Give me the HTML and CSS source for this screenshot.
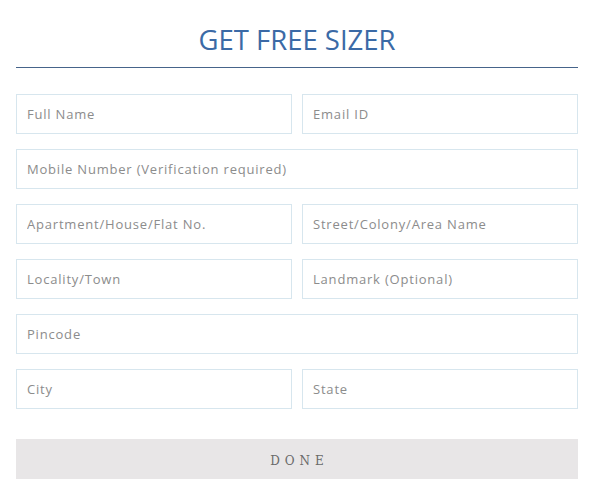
FILE: index.html
```html
<!DOCTYPE html>
<html>
<head>
<meta charset="utf-8">
<link rel="stylesheet" href="styles.css">
</head>
<body>
<div class="form-wrap">
  <h1 class="title">GET FREE SIZER</h1>
  <form class="form">
    <div class="row two">
      <input class="field" type="text" placeholder="Full Name">
      <input class="field" type="text" placeholder="Email ID">
    </div>
    <div class="row">
      <input class="field" type="text" placeholder="Mobile Number (Verification required)">
    </div>
    <div class="row two">
      <input class="field" type="text" placeholder="Apartment/House/Flat No.">
      <input class="field" type="text" placeholder="Street/Colony/Area Name">
    </div>
    <div class="row two">
      <input class="field" type="text" placeholder="Locality/Town">
      <input class="field" type="text" placeholder="Landmark (Optional)">
    </div>
    <div class="row">
      <input class="field" type="text" placeholder="Pincode">
    </div>
    <div class="row two">
      <input class="field" type="text" placeholder="City">
      <input class="field" type="text" placeholder="State">
    </div>
    <button class="done" type="button">DONE</button>
  </form>
</div>
</body>
</html>
```

FILE: styles.css
```css
html, body {
  margin: 0;
  padding: 0;
  background: #fff;
}
.form-wrap {
  padding: 0 12px 0 16px;
  font-family: "Open Sans", "Liberation Sans", sans-serif;
}
.title {
  margin: 0;
  padding-top: 25px;
  padding-bottom: 12px;
  text-align: center;
  font-weight: 400;
  font-size: 27.5px;
  line-height: 30px;
  color: #3b6aa6;
  border-bottom: 1px solid #46648a;
}
.form {
  display: flex;
  flex-direction: column;
  gap: 15px;
  padding-top: 26px;
}
.row {
  display: grid;
  grid-template-columns: 1fr;
  gap: 10px;
}
.row.two {
  grid-template-columns: 1fr 1fr;
}
.field {
  box-sizing: border-box;
  height: 40px;
  width: 100%;
  margin: 0;
  border: 1px solid #d7e6ee;
  border-radius: 0;
  padding: 0 10px;
  font-family: "Open Sans", "Liberation Sans", sans-serif;
  font-size: 13px;
  letter-spacing: 0.8px;
  color: #555;
  background: #fff;
  outline: none;
}
.field::placeholder {
  color: #8c8c8c;
}
.done {
  margin-top: 15px;
  height: 40px;
  border: 0;
  background: #e8e6e7;
  color: #6a6a6a;
  font-family: "DejaVu Serif", "Liberation Serif", serif;
  font-size: 12px;
  letter-spacing: 5px;
  padding: 4px 0 0 5px;
}
```
